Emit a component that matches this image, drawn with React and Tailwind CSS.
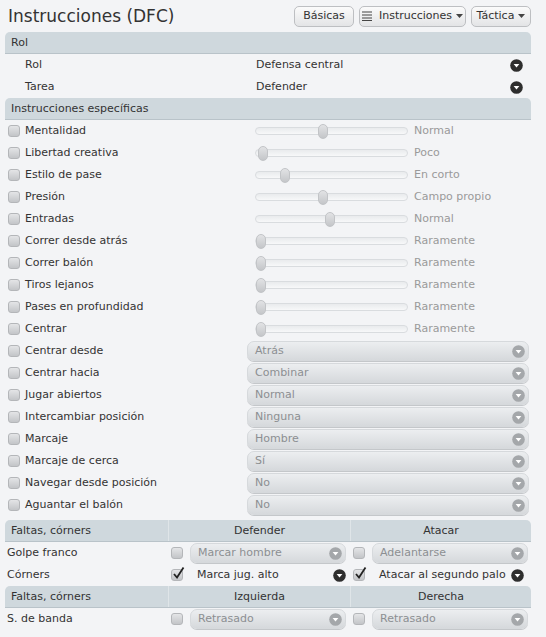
import React from 'react';

const FONT = { fontFamily: '"DejaVu Sans", "Liberation Sans", sans-serif' };

const SLIDERS = [
    ['Mentalidad', 41, 'Normal'],
    ['Libertad creativa', 1, 'Poco'],
    ['Estilo de pase', 16, 'En corto'],
    ['Presión', 41, 'Campo propio'],
    ['Entradas', 46, 'Normal'],
    ['Correr desde atrás', 0, 'Raramente'],
    ['Correr balón', 0, 'Raramente'],
    ['Tiros lejanos', 0, 'Raramente'],
    ['Pases en profundidad', 0, 'Raramente'],
    ['Centrar', 0, 'Raramente'],
];

const DROPS = [
    ['Centrar desde', 'Atrás'],
    ['Centrar hacia', 'Combinar'],
    ['Jugar abiertos', 'Normal'],
    ['Intercambiar posición', 'Ninguna'],
    ['Marcaje', 'Hombre'],
    ['Marcaje de cerca', 'Sí'],
    ['Navegar desde posición', 'No'],
    ['Aguantar el balón', 'No'],
];

function Circle({ dark }) {
    return (
        <svg width="13" height="13" viewBox="0 0 13 13" className="shrink-0">
            <circle cx="6.5" cy="6.5" r="6.3" fill={dark ? '#2e2e2e' : '#a4a7aa'} />
            <polygon points="3.6,5 9.4,5 6.5,8.6" fill="#fff" />
        </svg>
    );
}

function Check({ checked }) {
    return (
        <div className="relative w-[12px] h-[12px] shrink-0 rounded-[3px] border border-[#b4b6b9] bg-gradient-to-b from-[#e4e5e7] to-[#c3c5c8]">
            {checked && (
                <svg width="14" height="14" viewBox="0 0 14 14" className="absolute -top-[4px] left-0">
                    <path d="M2 8 L5 11.5 L11.5 1.5" stroke="#222" strokeWidth="1.8" fill="none" />
                </svg>
            )}
        </div>
    );
}

function Caret() {
    return (
        <svg width="7" height="4" viewBox="0 0 7 4" className="ml-[4px]">
            <polygon points="0,0 7,0 3.5,4" fill="#444" />
        </svg>
    );
}

function Header({ children }) {
    return (
        <div className="h-[22px] flex items-center pl-[6px] pt-[2px] bg-[#cfd8dd] border-b border-[#b9c3c9] text-[#333] rounded-t-[5px]">
            {children}
        </div>
    );
}

function Drop({ value, w = 'w-[282px]' }) {
    return (
        <div className={`${w} h-[20px] flex items-center justify-between pl-[7px] pr-[3px] rounded-[7px] border border-[#d6d9dc] bg-gradient-to-b from-[#eceef0] to-[#d6d9dc] text-[#8c8f92] shadow-[0_1px_0_#c4c7ca]`}>
            <span>{value}</span>
            <Circle />
        </div>
    );
}

function Slider({ pos }) {
    return (
        <div className="relative w-[153px] h-[8px] rounded-full border border-[#d9dcdf] bg-gradient-to-b from-[#e9ebed] to-[#f7f8f9]">
            <div
                className="absolute top-[-4px] w-[10px] h-[15px] rounded-[5px] border border-[#c2c4c7] bg-gradient-to-b from-[#e2e3e5] to-[#c4c6c9]"
                style={{ left: `${pos}%` }}
            />
        </div>
    );
}

function TableHead({ a, b }) {
    return (
        <div className="grid grid-cols-[163px_182px_181px] h-[22px] bg-[#cfd8dd] border-b border-[#b9c3c9] rounded-t-[5px] items-center">
            <span className="pl-[6px] pt-[2px]">Faltas, córners</span>
            <span className="border-l border-[#dfe5e8] h-full flex items-center justify-center pt-[2px]">{a}</span>
            <span className="border-l border-[#dfe5e8] h-full flex items-center justify-center pt-[2px]">{b}</span>
        </div>
    );
}

export default function App() {
    return (
        <div className="w-[546px] h-[637px] bg-[#f3f4f6] text-[11px] text-[#333] overflow-hidden" style={FONT}>
            {/* Title */}
            <div className="h-[32px] flex items-center justify-between pl-[8px] pr-[15px]">
                <h1 className="text-[17px] text-[#333] pt-[1px]">Instrucciones (DFC)</h1>
                <div className="flex gap-[5px]">
                    <button className="w-[60px] h-[21px] rounded-[5px] border border-[#bdbfc2] bg-gradient-to-b from-[#fbfbfb] to-[#e3e4e6] text-[#333]">Básicas</button>
                    <button className="w-[107px] h-[21px] rounded-[5px] border border-[#bdbfc2] bg-gradient-to-b from-[#fbfbfb] to-[#e3e4e6] text-[#333] flex items-center justify-center">
                        <svg width="11" height="10" viewBox="0 0 11 10" className="mr-[6px]">
                            <rect x="0" y="0.5" width="10" height="1" fill="#444" />
                            <rect x="0" y="3.5" width="10" height="1" fill="#444" />
                            <rect x="0" y="6.5" width="10" height="1" fill="#444" />
                            <rect x="0" y="9" width="10" height="1" fill="#444" />
                        </svg>
                        Instrucciones<Caret />
                    </button>
                    <button className="w-[60px] h-[21px] rounded-[5px] border border-[#bdbfc2] bg-gradient-to-b from-[#fbfbfb] to-[#e3e4e6] text-[#333] flex items-center justify-center">
                        Táctica<Caret />
                    </button>
                </div>
            </div>

            <div className="ml-[5px] w-[526px]">
                {/* Rol */}
                <Header>Rol</Header>
                {[['Rol', 'Defensa central'], ['Tarea', 'Defender']].map(([l, v]) => (
                    <div key={l} className="h-[22px] flex items-center">
                        <span className="w-[251px] pl-[20px]">{l}</span>
                        <span className="flex-1">{v}</span>
                        <span className="mr-[8px]"><Circle dark /></span>
                    </div>
                ))}

                {/* Instrucciones específicas */}
                <Header>Instrucciones específicas</Header>
                {SLIDERS.map(([l, p, v]) => (
                    <div key={l} className="h-[22px] flex items-center">
                        <div className="w-[250px] flex items-center pl-[3px] gap-[5px]">
                            <Check />
                            <span>{l}</span>
                        </div>
                        <Slider pos={p} />
                        <span className="ml-[6px] text-[#9a9a9a]">{v}</span>
                    </div>
                ))}
                {DROPS.map(([l, v]) => (
                    <div key={l} className="h-[22px] flex items-center">
                        <div className="w-[242px] flex items-center pl-[3px] gap-[5px]">
                            <Check />
                            <span>{l}</span>
                        </div>
                        <Drop value={v} />
                    </div>
                ))}

                {/* Faltas, córners */}
                <div className="mt-[4px]">
                    <TableHead a="Defender" b="Atacar" />
                </div>
                <div className="grid grid-cols-[163px_182px_181px] h-[22px] items-center">
                    <span className="pl-[2px]">Golpe franco</span>
                    <div className="flex items-center gap-[7px] pl-[3px]"><Check /><Drop value="Marcar hombre" w="w-[156px]" /></div>
                    <div className="flex items-center gap-[7px] pl-[3px]"><Check /><Drop value="Adelantarse" w="w-[156px]" /></div>
                </div>
                <div className="grid grid-cols-[163px_182px_181px] h-[22px] items-center">
                    <span className="pl-[2px]">Córners</span>
                    <div className="flex items-center pl-[3px]">
                        <Check checked />
                        <span className="ml-[14px] flex-1">Marca jug. alto</span>
                        <span className="mr-[4px]"><Circle dark /></span>
                    </div>
                    <div className="flex items-center pl-[3px]">
                        <Check checked />
                        <span className="ml-[14px] flex-1">Atacar al segundo palo</span>
                        <span className="mr-[7px]"><Circle dark /></span>
                    </div>
                </div>
                <TableHead a="Izquierda" b="Derecha" />
                <div className="grid grid-cols-[163px_182px_181px] h-[22px] items-center">
                    <span className="pl-[2px]">S. de banda</span>
                    <div className="flex items-center gap-[7px] pl-[3px]"><Check /><Drop value="Retrasado" w="w-[156px]" /></div>
                    <div className="flex items-center gap-[7px] pl-[3px]"><Check /><Drop value="Retrasado" w="w-[156px]" /></div>
                </div>
            </div>
        </div>
    );
}
